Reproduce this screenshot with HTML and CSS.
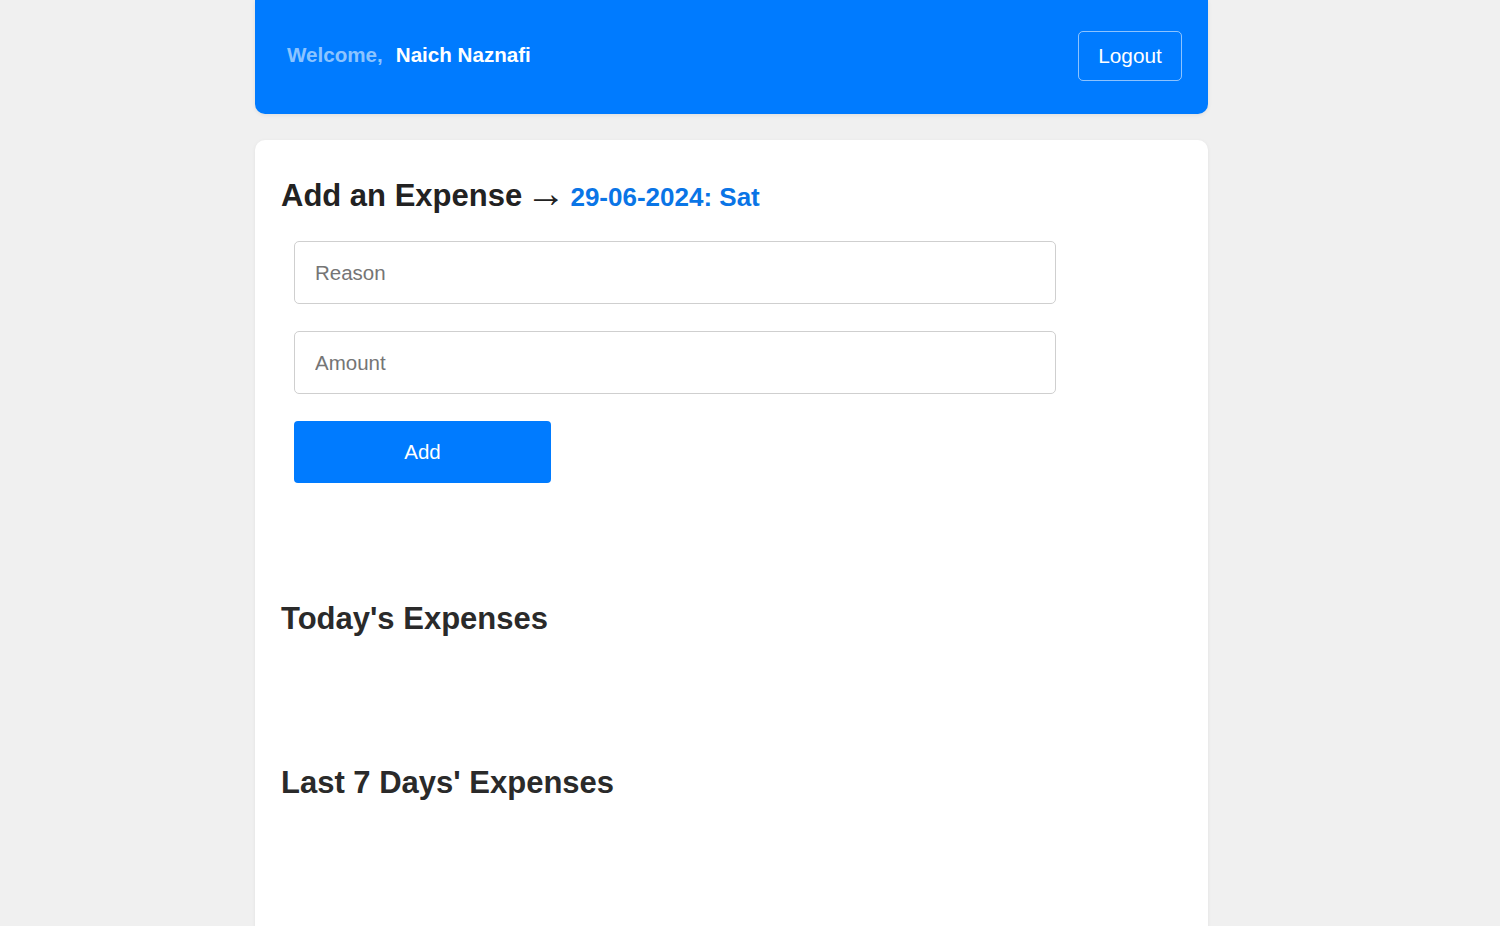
FILE: index.html
```html
<!DOCTYPE html>
<html lang="en">
<head>
<meta charset="utf-8">
<title>Expenses</title>
<link rel="stylesheet" href="styles.css">
</head>
<body>
<div class="page">
  <header class="topbar">
    <div class="welcome"><span class="welcome-label">Welcome,</span><span class="welcome-name">Naich Naznafi</span></div>
    <button class="logout" type="button">Logout</button>
  </header>
  <main class="card">
    <h1 class="title">Add an Expense <span class="arrow">&rarr;</span> <span class="date">29-06-2024: Sat</span></h1>
    <form class="form">
      <input class="field" type="text" placeholder="Reason">
      <input class="field" type="text" placeholder="Amount">
      <button class="add" type="button">Add</button>
    </form>
    <h2 class="section today">Today's Expenses</h2>
    <h2 class="section week">Last 7 Days' Expenses</h2>
  </main>
</div>
</body>
</html>
```

FILE: styles.css
```css
* { box-sizing: border-box; }
html, body { margin: 0; padding: 0; }
body {
  background: #f0f0f0;
  font-family: "Liberation Sans", Arial, sans-serif;
  color: #333;
  height: 926px;
  overflow: hidden;
  padding-right: 37px;
}
.page {
  width: 953px;
  margin: 0 auto;
  display: flex;
  flex-direction: column;
  gap: 26px;
}
.topbar {
  background: #007bff;
  height: 114px;
  border-radius: 0 0 10px 10px;
  display: flex;
  align-items: center;
  justify-content: space-between;
  padding: 0 26px 4px 32px;
  box-shadow: 0 1px 4px rgba(0,0,0,0.08);
}
.welcome {
  display: flex;
  gap: 13px;
  font-size: 20.6px;
  font-weight: bold;
}
.welcome-label { color: #8cc4ff; }
.welcome-name { color: #fff; }
.logout {
  font-family: inherit;
  font-size: 20.8px;
  color: #fff;
  background: transparent;
  border: 1px solid rgba(255,255,255,0.55);
  border-radius: 5px;
  width: 104px;
  height: 50px;
  margin-top: 2px;
  padding: 0;
}
.card {
  background: #fff;
  border-radius: 10px 10px 0 0;
  min-height: 800px;
  padding: 38px 26px 0 26px;
  box-shadow: 0 1px 4px rgba(0,0,0,0.06);
}
.title {
  margin: 0;
  font-size: 31px;
  line-height: 36px;
  font-weight: bold;
  color: #222;
  white-space: nowrap;
}
.arrow {
  font-weight: normal;
  font-size: 40px;
  line-height: 0;
  color: #222;
  vertical-align: -1px;
  margin: 0 -4px 0 -5px;
}
.date { color: #0a75e6; font-size: 26px; }
.form {
  display: flex;
  flex-direction: column;
  align-items: flex-start;
  gap: 27px;
  margin: 26px 0 0 13px;
}
.field {
  width: 762px;
  height: 63px;
  border: 1px solid #cfcfcf;
  border-radius: 5px;
  padding: 0 20px;
  font-family: inherit;
  font-size: 20.5px;
  color: #333;
  background: #fff;
}
.field::placeholder { color: #757575; }
.add {
  width: 257px;
  height: 62px;
  background: #007bff;
  border: none;
  border-radius: 4px;
  color: #fff;
  font-family: inherit;
  font-size: 20.5px;
}
.section {
  margin: 0;
  font-size: 31px;
  line-height: 36px;
  font-weight: bold;
  color: #2a2a2a;
}
.today { margin-top: 118px; }
.week { margin-top: 128px; }
```
